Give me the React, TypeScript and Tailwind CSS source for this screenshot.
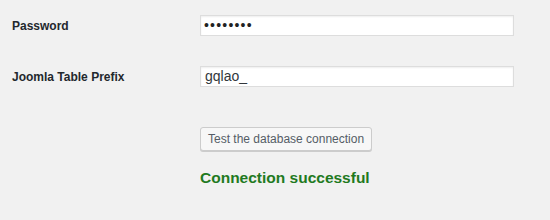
export default function App() {
  return (
    <div className="w-[550px] h-[220px] bg-[#f1f1f1] font-['Liberation_Sans',Arial,sans-serif] text-[#23282d]">
      <div className="grid grid-cols-[200px_314px] pt-[15px] gap-y-[30px]">
        <label className="pl-[12px] text-[12px] font-bold leading-[20px] self-center">Password</label>
        <input
          type="text"
          readOnly
          value="••••••••"
          className="h-[21px] bg-white border border-[#dddddd] px-[3px] text-[14px] tracking-[1.2px] text-[#222] outline-none shadow-[inset_0_1px_2px_rgba(0,0,0,0.07)]"
        />
        <label className="pl-[12px] text-[12px] font-bold leading-[20px] self-center">Joomla Table Prefix</label>
        <input
          type="text"
          readOnly
          value="gqlao_"
          className="h-[21px] bg-white border border-[#dddddd] px-[4px] text-[14px] text-[#32373c] outline-none shadow-[inset_0_1px_2px_rgba(0,0,0,0.07)]"
        />
      </div>
      <div className="pl-[200px] pt-[39px]">
        <button className="h-[24px] px-[7px] bg-[#f7f7f7] border border-[#cccccc] rounded-[3px] text-[12px] text-[#555d66] shadow-[0_1px_0_#cccccc]">
          Test the database connection
        </button>
        <p className="mt-[17px] text-[15.5px] font-bold text-[#1f7a1f] leading-[20px]">Connection successful</p>
      </div>
    </div>
  );
}
